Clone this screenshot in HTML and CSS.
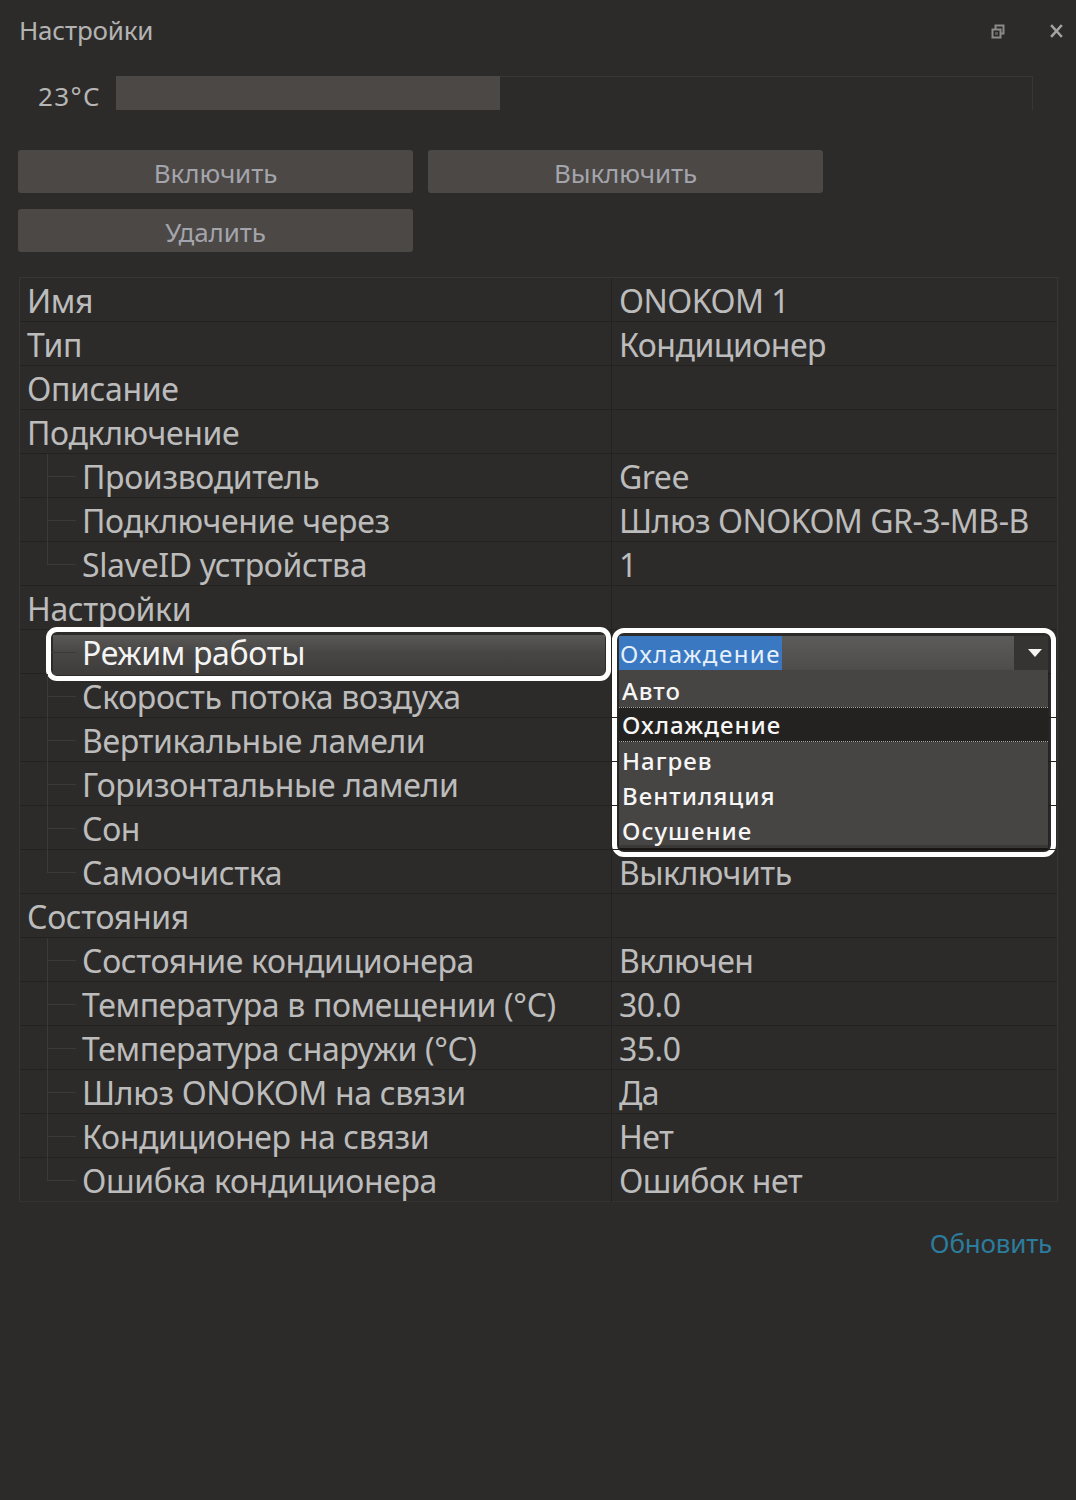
FILE: index.html
```html
<!DOCTYPE html>
<html lang="ru">
<head>
<meta charset="utf-8">
<title>Настройки</title>
<link rel="stylesheet" href="styles.css">
</head>
<body>
<div class="window">
  <div class="header">
    <div class="title">Настройки</div>
    <div class="win-icons">
      <svg class="ic-restore" width="14" height="15" viewBox="0 0 14 15"><rect x="4.5" y="1.5" width="8" height="8" fill="none" stroke="#8c8b89" stroke-width="2"/><rect x="1.5" y="5.5" width="8" height="8" fill="#2d2b29" stroke="#8c8b89" stroke-width="2"/><rect x="4" y="8" width="3" height="3" fill="#5a5856"/></svg>
      <svg class="ic-close" width="13" height="14" viewBox="0 0 13 14"><path d="M2 2 L11 12 M11 2 L2 12" stroke="#a3a2a0" stroke-width="2.6" stroke-linecap="square"/></svg>
    </div>
  </div>

  <div class="temp-row">
    <div class="temp-label">23°C</div>
    <div class="track"><div class="fill" style="width:384px"></div></div>
  </div>

  <div class="buttons">
    <div class="btn">Включить</div>
    <div class="btn">Выключить</div>
    <div class="btn">Удалить</div>
  </div>

  <div class="table">
    <div class="row"><div class="cell key">Имя</div><div class="cell val">ONOKOM 1</div></div>
    <div class="row"><div class="cell key">Тип</div><div class="cell val">Кондиционер</div></div>
    <div class="row"><div class="cell key">Описание</div><div class="cell val"></div></div>
    <div class="row"><div class="cell key">Подключение</div><div class="cell val"></div></div>
    <div class="row"><div class="cell key child">Производитель</div><div class="cell val">Gree</div></div>
    <div class="row"><div class="cell key child">Подключение через</div><div class="cell val">Шлюз ONOKOM GR-3-MB-B</div></div>
    <div class="row"><div class="cell key child last">SlaveID устройства</div><div class="cell val">1</div></div>
    <div class="row"><div class="cell key">Настройки</div><div class="cell val"></div></div>
    <div class="row selected-row">
      <div class="cell key child"><div class="sel-bar"></div><span class="sel-text">Режим работы</span></div>
      <div class="cell val"></div>
      <div class="mark mark-key"></div>
      <div class="combo-wrap">
        <div class="combo">
          <span class="combo-text">Охлаждение</span>
          <span class="combo-btn"><svg width="14" height="8" viewBox="0 0 14 8"><path d="M0 0 H14 L7 8 Z" fill="#f4f4f4"/></svg></span>
        </div>
        <div class="list">
          <div class="item">Авто</div>
          <div class="item active">Охлаждение</div>
          <div class="item">Нагрев</div>
          <div class="item">Вентиляция</div>
          <div class="item">Осушение</div>
        </div>
      </div>
      <div class="mark mark-val"></div>
    </div>
    <div class="row"><div class="cell key child">Скорость потока воздуха</div><div class="cell val"></div></div>
    <div class="row"><div class="cell key child">Вертикальные ламели</div><div class="cell val"></div></div>
    <div class="row"><div class="cell key child">Горизонтальные ламели</div><div class="cell val"></div></div>
    <div class="row"><div class="cell key child">Сон</div><div class="cell val"></div></div>
    <div class="row"><div class="cell key child last">Самоочистка</div><div class="cell val">Выключить</div></div>
    <div class="row"><div class="cell key">Состояния</div><div class="cell val"></div></div>
    <div class="row"><div class="cell key child">Состояние кондиционера</div><div class="cell val">Включен</div></div>
    <div class="row"><div class="cell key child">Температура в помещении (°C)</div><div class="cell val">30.0</div></div>
    <div class="row"><div class="cell key child">Температура снаружи (°C)</div><div class="cell val">35.0</div></div>
    <div class="row"><div class="cell key child">Шлюз ONOKOM на связи</div><div class="cell val">Да</div></div>
    <div class="row"><div class="cell key child">Кондиционер на связи</div><div class="cell val">Нет</div></div>
    <div class="row"><div class="cell key child last">Ошибка кондиционера</div><div class="cell val">Ошибок нет</div></div>
  </div>

  <div class="footer"><a class="refresh">Обновить</a></div>
</div>
</body>
</html>
```

FILE: styles.css
```css
html, body {
  margin: 0;
  padding: 0;
  background: #2d2b29;
}
body {
  width: 1076px;
  height: 1500px;
  font-family: "Noto Sans", "DejaVu Sans", sans-serif;
  color: #b9b9b9;
}
.window {
  padding: 0 19px 0 18px;
}
.header {
  height: 62px;
  display: flex;
  align-items: center;
  justify-content: space-between;
  padding-left: 1px;
}
.title {
  font-size: 26px;
  color: #b3b3b3;
  letter-spacing: -0.2px;
  margin-top: -2px;
}
.win-icons {
  display: flex;
  align-items: center;
  gap: 45px;
  margin-right: -6px;
}
.temp-row {
  margin-top: 14px;
  height: 34px;
  display: flex;
  align-items: stretch;
}
.temp-label {
  width: 98px;
  padding-left: 20px;
  box-sizing: border-box;
  font-size: 26px;
  line-height: 40px;
  color: #b6b6b6;
  letter-spacing: 1.4px;
}
.track {
  width: 917px;
  box-sizing: border-box;
  border-top: 1px solid #393735;
  border-right: 1px solid #393735;
  display: flex;
}
.fill {
  background: #4b4845;
  margin-top: -1px;
}
.buttons {
  margin-top: 40px;
  display: grid;
  grid-template-columns: 395px 395px;
  column-gap: 15px;
  row-gap: 16px;
}
.btn {
  height: 43px;
  background: #4b4845;
  border-radius: 3px;
  font-size: 26px;
  line-height: 46px;
  text-align: center;
  color: #a4a4ac;
  letter-spacing: -0.1px;
}
.table {
  margin-top: 25px;
  margin-left: 1px;
  width: 1039px;
  box-sizing: border-box;
  border: 1px solid #393735;
  border-bottom-color: #353331;
}
.row {
  position: relative;
  display: grid;
  grid-template-columns: 592px 1fr;
  height: 44px;
  box-sizing: border-box;
  border-bottom: 1px solid #232220;
}
.row:last-child { border-bottom: none; height: 43px; }
.cell {
  font-size: 32px;
  font-stretch: 87.5%;
  line-height: 43px;
  padding-top: 1px;
  white-space: nowrap;
  color: #bcbcbc;
}
.key {
  position: relative;
  padding-left: 7px;
  border-right: 1px solid #232220;
  letter-spacing: -0.35px;
}
.val {
  padding-left: 7px;
  letter-spacing: -0.5px;
}
.child {
  padding-left: 62px;
}
.child::before {
  content: "";
  position: absolute;
  left: 27px;
  top: 0;
  bottom: -1px;
  width: 1px;
  background: #3b3a38;
}
.child.last::before {
  bottom: 50%;
}
.child::after {
  content: "";
  position: absolute;
  left: 27px;
  top: 50%;
  width: 29px;
  height: 1px;
  background: #3b3a38;
}
.sel-bar {
  position: absolute;
  left: 33px;
  right: 6px;
  top: 5px;
  bottom: -1px;
  background: linear-gradient(#5a5856, #474644 45%, #3e3d3b);
}
.sel-text {
  position: relative;
  color: #f4f4f4;
}
.mark {
  position: absolute;
  border: 5px solid #ffffff;
  border-radius: 11px;
  pointer-events: none;
}
.mark-key {
  left: 26px;
  top: -3px;
  width: 555px;
  height: 44px;
}
.mark-val {
  left: 592px;
  top: -2px;
  width: 434px;
  height: 219px;
  border-radius: 12px;
}
.combo-wrap {
  position: absolute;
  left: 599px;
  top: 6px;
  width: 429px;
  z-index: 2;
  font-size: 24px;
}
.combo {
  height: 34px;
  display: flex;
  background: linear-gradient(#5d5b59, #4f4d4b);
}
.combo-text {
  background: #3a79c2;
  color: #e6f0fa;
  padding: 0 1px;
  line-height: 35px;
  letter-spacing: 1.5px;
}
.combo-btn {
  margin-left: auto;
  width: 34px;
  box-sizing: border-box;
  padding-left: 8px;
  background: #363433;
  display: flex;
  align-items: center;
  justify-content: center;
}
.list {
  background: #474543;
  height: 178px;
  box-sizing: border-box;
  padding-top: 2px;
  border-bottom: 3px solid #3a3837;
  box-shadow: 0 2px 2px rgba(0,0,0,0.5);
}
.item {
  height: 35px;
  line-height: 37px;
  padding-left: 3px;
  color: #f6f6f6;
  font-weight: 500;
  letter-spacing: 1px;
  box-sizing: border-box;
}
.item.active {
  background: #232221;
  border-top: 1px dotted #a8a8a8;
  border-bottom: 1px dotted #a8a8a8;
  line-height: 34px;
}
.footer {
  display: flex;
  justify-content: flex-end;
  margin-top: 23px;
  padding-right: 5px;
}
.refresh {
  font-size: 26px;
  color: #2c7c9e;
  letter-spacing: -0.2px;
}
```
